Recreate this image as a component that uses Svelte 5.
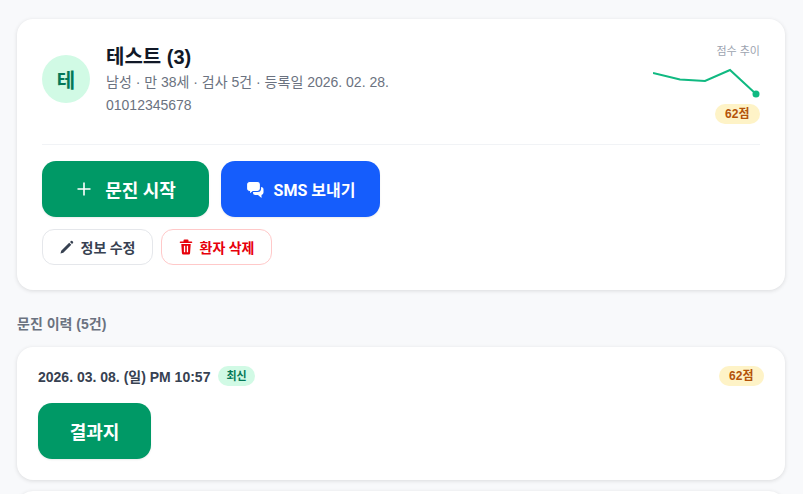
<script>
  let patient = { name: '테스트 (3)', initial: '테', phone: '01012345678' };
  let meta = ['남성', '만 38세', '검사 5건', '등록일 2026. 02. 28.'];
</script>

<main class="page">
  <section class="card patient">
    <div class="top">
      <div class="avatar">{patient.initial}</div>
      <div class="info">
        <h1>{patient.name}</h1>
        <div class="meta">{meta.join(' · ')}</div>
        <div class="meta">{patient.phone}</div>
      </div>
      <div class="trend">
        <span class="trend-label">점수 추이</span>
        <svg width="107" height="34" viewBox="0 0 107 34">
          <polyline points="0,8 27,14.500 52,16 77,5 103,29" fill="none" stroke="#10b981" stroke-width="2" />
          <circle cx="103" cy="29" r="3.5" fill="#10b981" />
        </svg>
        <span class="score">62점</span>
      </div>
    </div>

    <div class="actions">
      <button class="big green start">
        <svg width="18" height="18" viewBox="0 0 18 18"><path d="M9 2.500v13M2.500 9h13" stroke="#fff" stroke-width="1.6" fill="none" /></svg>
        문진 시작
      </button>
      <button class="big blue sms">
        <svg width="18" height="18" viewBox="0 0 18 18" fill="#fff">
          <path d="M9 7h6a2.500 2.500 0 0 1 2.500 2.500v3A2.500 2.500 0 0 1 15.500 15v3l-3.500-3H9.500A2.500 2.500 0 0 1 7 12.500V9a2 2 0 0 1 2-2z" />
          <path d="M3.500 1.500h8a3 3 0 0 1 3 3v4a3 3 0 0 1-3 3H7L3.500 14.500v-3a3 3 0 0 1-3-3v-4a3 3 0 0 1 3-3z" stroke="#155dfc" stroke-width="1.2" />
        </svg>
        SMS 보내기
      </button>
    </div>

    <div class="sub-actions">
      <button class="small edit">
        <svg width="14" height="14" viewBox="0 0 14 14" fill="#374151"><path d="M0.500 13.500l.7-2.800 8-8 2.100 2.100-8 8zM10 2l1-1a1 1 0 0 1 1.300 0l.7.700a1 1 0 0 1 0 1.300l-1 1z" /></svg>
        정보 수정
      </button>
      <button class="small del">
        <svg width="14" height="16" viewBox="0 0 14 16" fill="#e7000b"><path d="M4.500 1.500a1 1 0 0 1 1-1h3a1 1 0 0 1 1 1V2.500h3a.8.800 0 0 1 0 1.600h-11a.8.800 0 0 1 0-1.600h3zM2.300 5h9.400l-.6 9a1.500 1.500 0 0 1-1.500 1.500H4.400A1.500 1.500 0 0 1 2.900 14zM4.900 6.800v6.500h1.300V6.800zM7.800 6.800v6.500h1.300V6.800z" fill-rule="evenodd" /></svg>
        환자 삭제
      </button>
    </div>
  </section>

  <h2>문진 이력 (5건)</h2>

  <section class="card record">
    <div class="record-head">
      <span class="date">2026. 03. 08. (일) PM 10:57</span>
      <span class="latest">최신</span>
      <span class="score right">62점</span>
    </div>
    <button class="big green result">결과지</button>
  </section>

  <section class="card next"></section>
</main>

<style>
  :global(body) {
    margin: 0;
    background: #f8f9fb;
    font-family: "Liberation Sans", "Noto Sans CJK KR", sans-serif;
    overflow: hidden;
  }

  .page {
    padding: 19px 18px 0 17px;
    height: 475px;
    overflow: hidden;
  }

  .card {
    background: #fff;
    border-radius: 16px;
    box-shadow: 0 1px 4px rgba(0, 0, 0, 0.12);
  }

  .patient {
    padding: 24px 25px 25px;
    height: 271px;
    box-sizing: border-box;
  }

  .top {
    display: flex;
    align-items: flex-start;
    gap: 16px;
    height: 102px;
    border-bottom: 1px solid #f1f3f6;
    box-sizing: border-box;
    margin-bottom: 16px;
  }

  .avatar {
    width: 48px;
    height: 48px;
    margin-top: 12px;
    border-radius: 50%;
    background: #d1fae5;
    color: #047857;
    font-size: 20px;
    font-weight: 700;
    display: flex;
    align-items: center;
    justify-content: center;
    flex: none;
  }

  .info {
    flex: 1;
  }

  h1 {
    margin: 0;
    font-size: 20px;
    line-height: 28px;
    font-weight: 700;
    color: #111827;
  }

  .meta {
    font-size: 14px;
    line-height: 23px;
    color: #6b7280;
  }

  .trend {
    display: flex;
    flex-direction: column;
    align-items: flex-end;
  }

  .trend-label {
    font-size: 11px;
    line-height: 16px;
    color: #9ca3af;
    margin-bottom: 6px;
  }

  .trend svg {
    display: block;
  }

  .score {
    background: #fef3c7;
    color: #b45309;
    font-size: 12px;
    font-weight: 700;
    line-height: 20px;
    padding: 0 10.5px;
    border-radius: 10px;
  }

  .trend .score {
    margin-top: 5px;
  }

  .actions {
    display: flex;
    gap: 12px;
    margin-bottom: 12px;
  }

  button {
    font-family: Roboto, "Noto Sans CJK KR", sans-serif;
    cursor: pointer;
    display: flex;
    align-items: center;
    justify-content: center;
    box-sizing: border-box;
  }

  .big {
    height: 56px;
    border: 0;
    border-radius: 14px;
    color: #fff;
    font-weight: 700;
    font-size: 18px;
    gap: 10px;
    box-shadow: 0 1px 2px rgba(0, 0, 0, 0.08);
  }

  .green {
    background: #009966;
    width: 167px;
  }

  .start {
    gap: 12px;
  }

  .blue {
    background: #155dfc;
    width: 159px;
  }

  .sms {
    font-size: 16px;
  }

  .sub-actions {
    display: flex;
    gap: 8px;
  }

  .small {
    width: 111px;
    height: 36px;
    background: #fff;
    border-radius: 12px;
    font-size: 14px;
    font-weight: 700;
    gap: 7px;
    padding: 0;
  }

  .edit {
    border: 1px solid #e5e7eb;
    color: #374151;
  }

  .del {
    border: 1px solid #ffc9c9;
    color: #e7000b;
  }

  h2 {
    margin: 25px 0 14px;
    font-size: 14px;
    line-height: 18px;
    font-weight: 700;
    color: #6b7280;
  }

  .record {
    height: 133px;
    padding: 19px 21px;
    box-sizing: border-box;
  }

  .record-head {
    display: flex;
    align-items: center;
    height: 20px;
    margin-bottom: 17px;
  }

  .date {
    font-size: 14px;
    font-weight: 700;
    color: #374151;
  }

  .latest {
    margin-left: 8px;
    background: #d1fae5;
    color: #047857;
    font-size: 11px;
    font-weight: 700;
    line-height: 20px;
    padding: 0 8px;
    border-radius: 10px;
  }

  .right {
    margin-left: auto;
  }

  .result {
    width: 113px;
  }

  .next {
    margin-top: 11px;
    height: 60px;
  }
</style>
